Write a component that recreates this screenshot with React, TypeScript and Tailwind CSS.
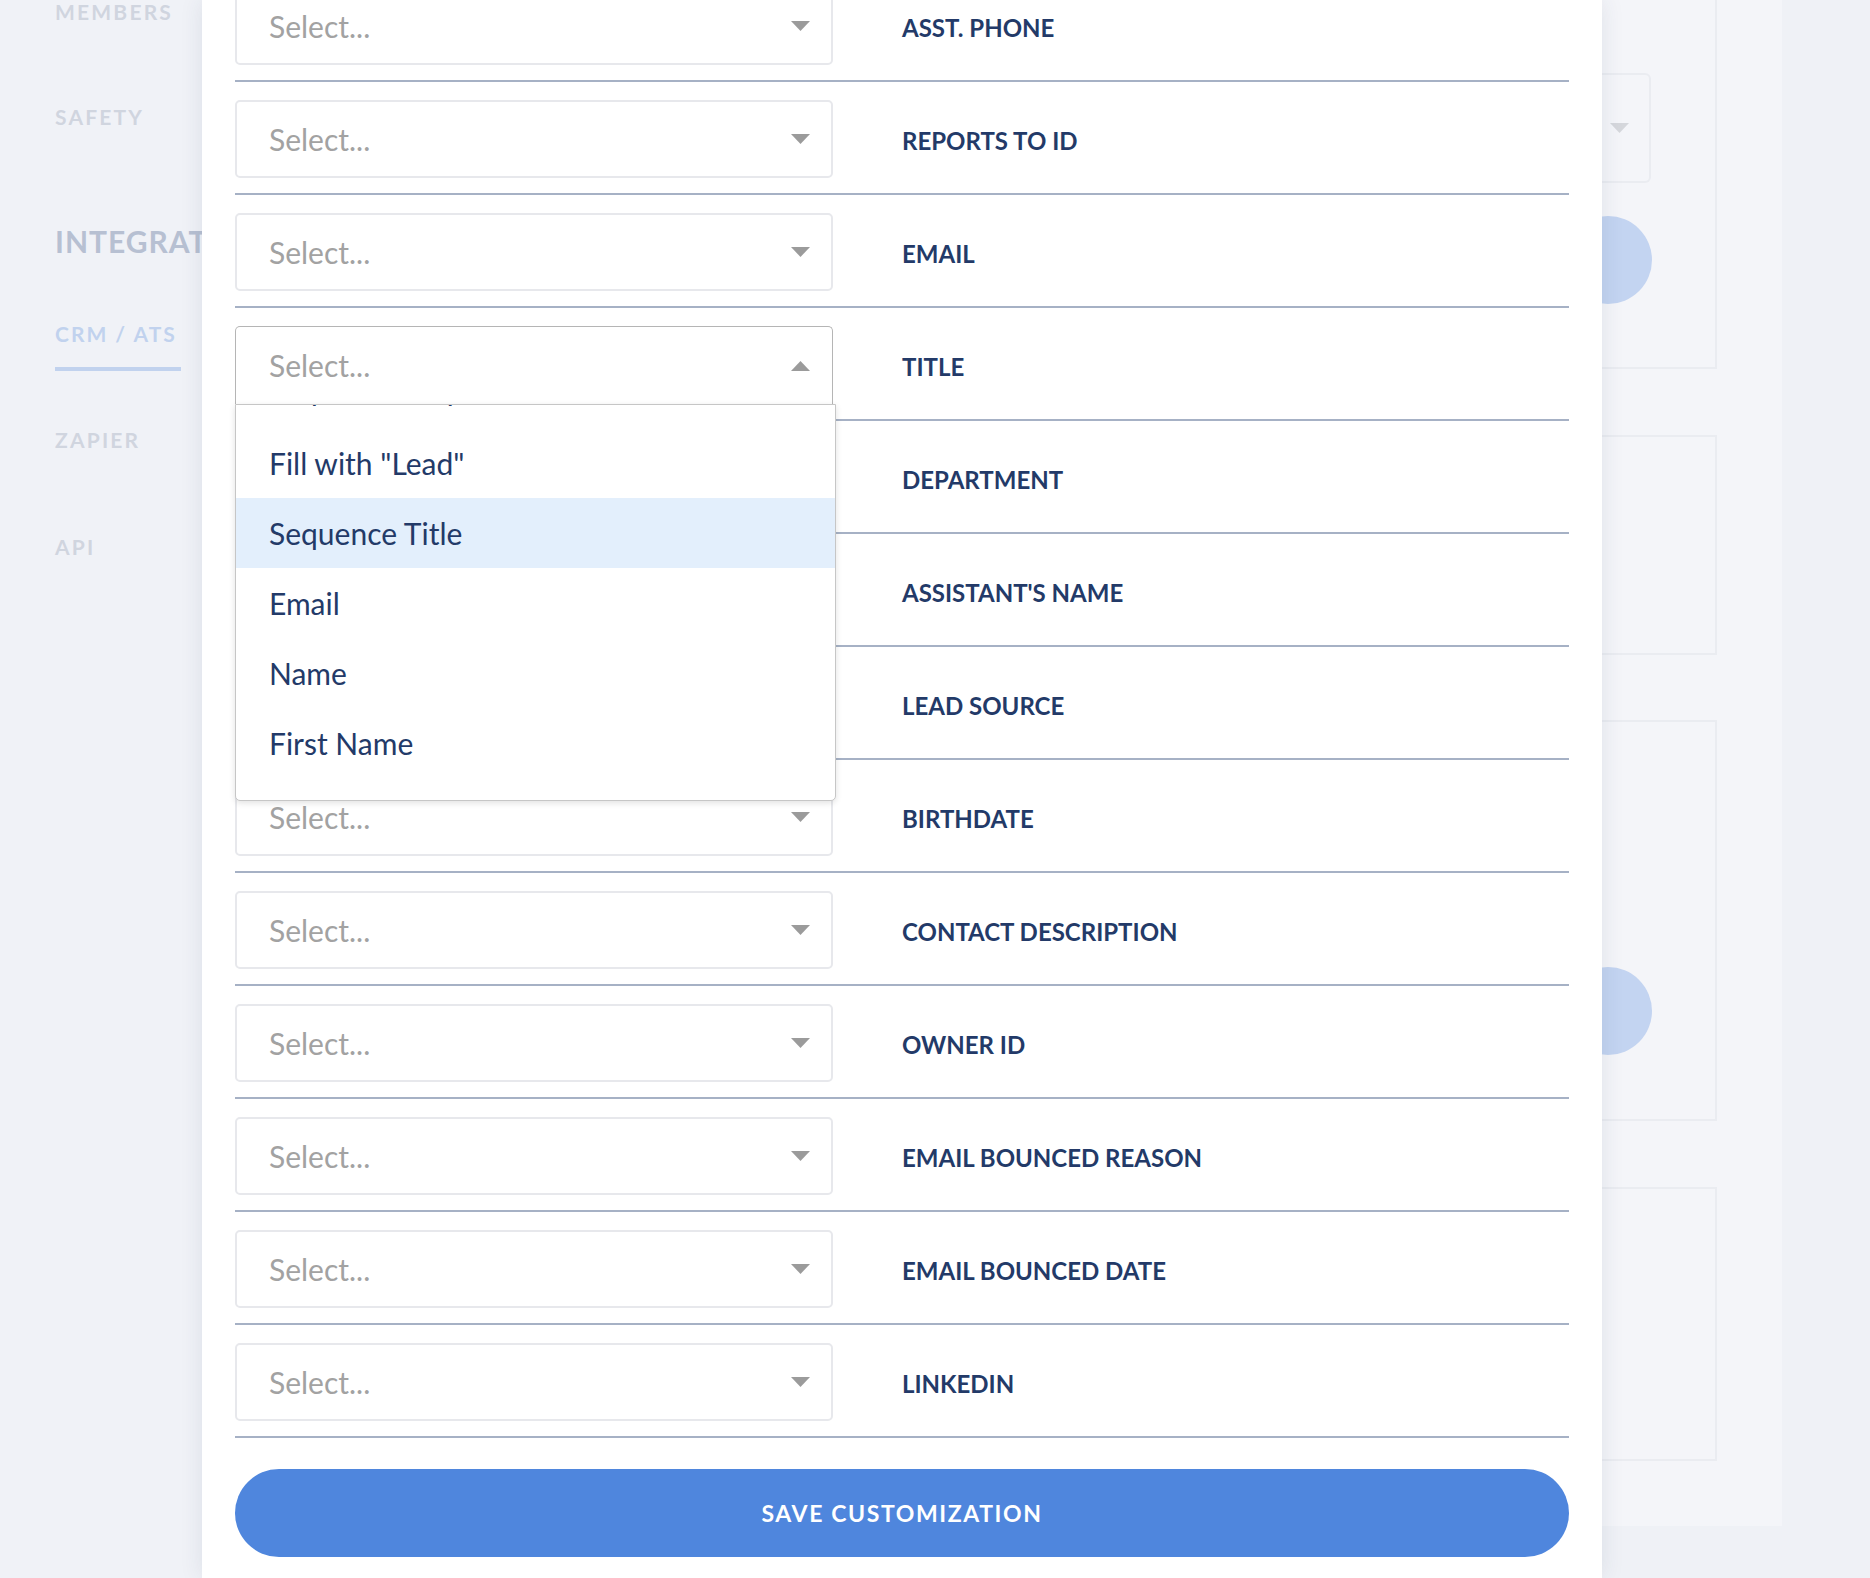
import React from 'react';

const FIELDS = [
	'ASST. PHONE',
	'REPORTS TO ID',
	'EMAIL',
	'TITLE',
	'DEPARTMENT',
	"ASSISTANT'S NAME",
	'LEAD SOURCE',
	'BIRTHDATE',
	'CONTACT DESCRIPTION',
	'OWNER ID',
	'EMAIL BOUNCED REASON',
	'EMAIL BOUNCED DATE',
	'LINKEDIN',
];

const OPTIONS = ['Fill with "Lead"', 'Sequence Title', 'Email', 'Name', 'First Name'];

const font = { fontFamily: 'Lato, "Open Sans", sans-serif' };

function Caret({ up = false, color = '#9b9b9b' }: { up?: boolean; color?: string }) {
	return (
		<svg width="19" height="10" viewBox="0 0 19 10" className="shrink-0">
			{up ? <path d="M0 10 L9.5 0 L19 10 Z" fill={color} /> : <path d="M0 0 L19 0 L9.5 10 Z" fill={color} />}
		</svg>
	);
}

function SelectBox({ open = false }: { open?: boolean }) {
	return (
		<div className="relative w-[598px] shrink-0">
			<div
				className={
					open
						? 'flex h-[78px] items-center justify-between rounded-t-[5px] border-[1.5px] border-b-0 border-[#b5b5b5] bg-white pl-[33px] pr-[22px]'
						: 'flex h-[78px] items-center justify-between rounded-[5px] border-2 border-[#e7e8ec] bg-white pl-[32px] pr-[21px]'
				}
			>
				<span className="text-[30px] text-[#a2a2a2]">Select...</span>
				<Caret up={open} />
			</div>
			{open && (
				<div className="absolute left-0 top-[78px] z-20 h-[397px] w-[601px] overflow-hidden rounded-b-[5px] border-[1.5px] border-[#c6c6c6] bg-white shadow-[0_2px_6px_rgba(0,0,0,0.12)]">
					{/* list is scrolled: previous option peeks at the top */}
					<div className="-mt-[47px] flex h-[70px] items-center pb-[8px] pl-[33px] text-[30px] text-[#233a68]">
						Sequence Step
					</div>
					{OPTIONS.map((o, i) => (
						<div
							key={o}
							className={
								'flex h-[70px] items-center pl-[33px] text-[30px] text-[#233a68] ' +
								(i === 1 ? 'bg-[#e3effc]' : '')
							}
						>
							{o}
						</div>
					))}
				</div>
			)}
		</div>
	);
}

function Sidebar() {
	return (
		<div className="w-[202px] shrink-0 overflow-hidden whitespace-nowrap bg-[#f0f2f7] pl-[55px] font-bold text-[#d0d5df]">
			<div className="-mt-[2px] flex h-[28px] items-center text-[21px] tracking-[2.2px]">MEMBERS</div>
			<div className="mt-[77px] flex h-[28px] items-center text-[21px] tracking-[2.2px]">SAFETY</div>
			<div className="mt-[92px] flex h-[36px] items-center text-[30px] tracking-[1px] text-[#b7c0d2]">INTEGRATIONS</div>
			<div className="mt-[61px] w-[126px]">
				<div className="flex h-[28px] items-center text-[21px] tracking-[2px] text-[#c1d2ee]">CRM / ATS</div>
				<div className="mt-[19px] h-[4px] w-[126px] bg-[#c1d2ee]" />
			</div>
			<div className="mt-[55px] flex h-[28px] items-center text-[21px] tracking-[2.2px]">ZAPIER</div>
			<div className="mt-[79px] flex h-[28px] items-center text-[21px] tracking-[2.2px]">API</div>
		</div>
	);
}

function BackPanel() {
	return (
		<div className="flex flex-1">
			<div className="flex h-[1526px] w-[180px] flex-col bg-[#f4f5f9]">
				<div className="-mt-[20px] flex h-[389px] w-[115px] flex-col border-b-2 border-r-2 border-[#eaecf1]">
					<div className="mt-[93px] flex h-[110px] w-[49px] items-center rounded-r-[6px] border-y-2 border-r-2 border-[#eaecf1] pl-[8px]">
						<Caret color="#d5d7dc" />
					</div>
					<div className="-ml-[38px] mt-[33px] h-[88px] w-[88px] shrink-0 rounded-full bg-[#c3d4f1]" />
				</div>
				<div className="mt-[66px] h-[220px] w-[115px] border-y-2 border-r-2 border-[#eaecf1]" />
				<div className="mt-[65px] flex h-[401px] w-[115px] flex-col border-y-2 border-r-2 border-[#eaecf1]">
					<div className="-ml-[38px] mt-[245px] h-[88px] w-[88px] shrink-0 rounded-full bg-[#c3d4f1]" />
				</div>
				<div className="mt-[66px] h-[274px] w-[115px] border-y-2 border-r-2 border-[#eaecf1]" />
			</div>
			<div className="flex-1 bg-[#eff1f6]" />
		</div>
	);
}

export default function App() {
	return (
		<div className="flex h-[1578px] w-[1870px] overflow-hidden bg-[#eff1f6]" style={font}>
			<Sidebar />
			<div className="relative z-10 flex h-[1578px] w-[1400px] shrink-0 flex-col bg-white px-[33px] shadow-[0_0_22px_rgba(40,55,90,0.10)]">
				<div className="-mt-[31px] flex flex-col">
					{FIELDS.map((f, i) => (
						<div key={f} className="flex h-[113px] items-center border-b-2 border-[#a6b1c5] pb-[14px] pt-[17px]">
							<SelectBox open={i === 3} />
							<div className="ml-[69px] pt-[4px] text-[24px] font-bold text-[#233a68]">{f}</div>
						</div>
					))}
				</div>
				<button className="mt-[31px] flex h-[88px] w-full items-center justify-center rounded-full bg-[#4f86dd] text-[23px] font-bold tracking-[1.6px] text-white">
					SAVE CUSTOMIZATION
				</button>
			</div>
			<BackPanel />
		</div>
	);
}
